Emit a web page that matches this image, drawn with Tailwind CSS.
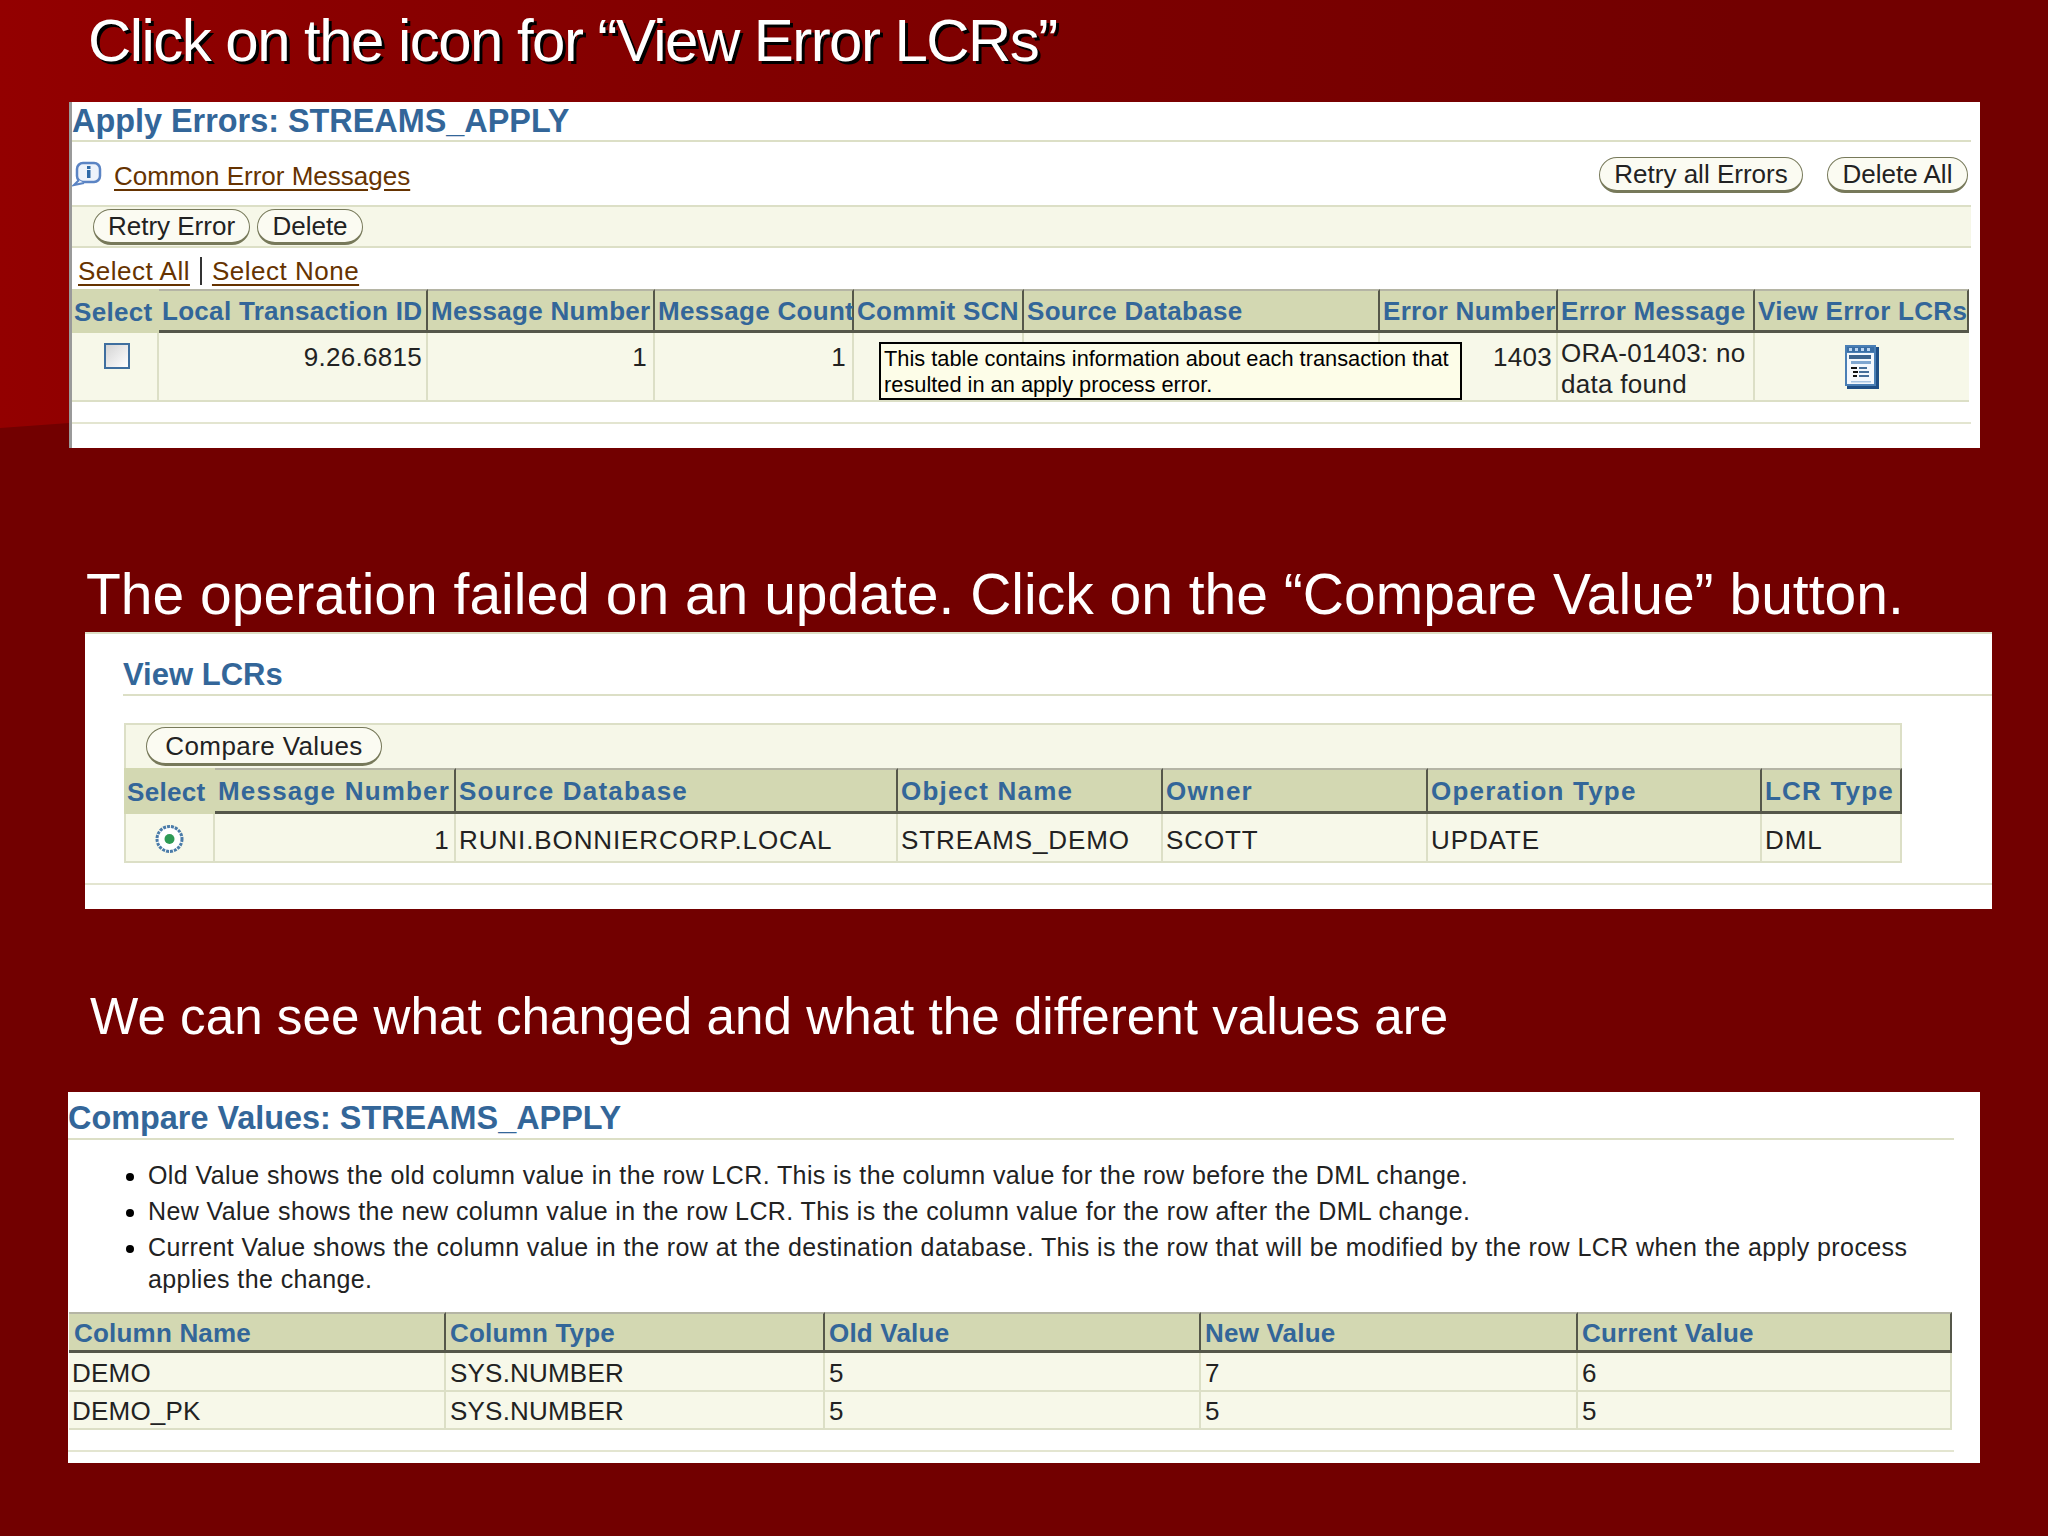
<!DOCTYPE html>
<html lang="en">
<head>
    <meta charset="UTF-8">
    <title>Apply Errors</title>
    <script src="https://cdn.jsdelivr.net/npm/@tailwindcss/browser@4"></script>
</head>
<body class="bg-[#720000] font-['Liberation_Sans',Arial,sans-serif]">
    <div class="relative w-[2048px] h-[1536px] overflow-hidden">
        <!-- Slide background -->
        <div class="absolute left-0 top-0 w-[2048px] h-[430px] bg-[linear-gradient(90deg,#930000,#8a0000_15%,#800000_40%,#720000_85%)] [clip-path:polygon(0_0,100%_0,100%_400px,69px_423px,0_428px)]"></div>

        <div class="relative">
            <!-- Slide 1 -->
            <h1 class="h-[102px] pl-[88px] pt-[9px] text-[60px] leading-[64px] tracking-[-1.55px] text-white [text-shadow:3px_3px_0_#000]">Click on the icon for “View Error LCRs”</h1>
            <section class="ml-[69px] w-[1911px] h-[346px] bg-white border-l-[3px] border-[#9a9a9a] pr-[9px] text-[26px] text-[#222]">
                <div class="h-[40px] pt-[1px] border-b-2 border-[#dcdfc6] text-[32.4px] leading-[36px] font-semibold text-[#336699]">Apply Errors: STREAMS_APPLY</div>
                <div class="h-[63px] flex items-center justify-between pr-[3px] pt-[5px]">
                    <div class="flex items-center">
                        <svg class="w-[30px] h-[26px] -mt-[4px]" viewBox="0 0 30 26" fill="none">
                            <rect x="5" y="2" width="23" height="19" rx="6" fill="#eef3fb" stroke="#5b84c4" stroke-width="2.5"/>
                            <path d="M7 19 L2 24 L12 22" fill="#eef3fb" stroke="#5b84c4" stroke-width="2"/>
                            <rect x="15" y="9" width="3.5" height="8" fill="#2f6aa8"/>
                            <rect x="15" y="5" width="3.5" height="3" fill="#2f6aa8"/>
                        </svg>
                        <a class="ml-[12px] text-[#663300] underline underline-offset-4">Common Error Messages</a>
                    </div>
                    <div class="flex gap-[24px] -mt-[2px]">
                        <button class="h-[36px] w-[204px] rounded-full border border-[#77795a] border-b-[3px] bg-[#fbfbf2] leading-[30px]">Retry all Errors</button>
                        <button class="h-[36px] w-[141px] rounded-full border border-[#77795a] border-b-[3px] bg-[#fbfbf2] leading-[30px]">Delete All</button>
                    </div>
                </div>
                <div class="h-[43px] flex items-center gap-[7px] pl-[21px] bg-[#f6f7e8] border-y-2 border-[#dcdfc6]">
                    <button class="h-[36px] w-[157px] rounded-full border border-[#77795a] border-b-[3px] bg-[#fbfbf2] leading-[30px]">Retry Error</button>
                    <button class="h-[36px] w-[106px] rounded-full border border-[#77795a] border-b-[3px] bg-[#fbfbf2] leading-[30px]">Delete</button>
                </div>
                <div class="h-[41px] flex items-center pl-[6px] pt-[5px] tracking-[0.5px] text-[#663300]">
                    <a class="underline underline-offset-4">Select All</a>
                    <span class="mx-[10px] w-[2px] h-[28px] bg-[#333]"></span>
                    <a class="underline underline-offset-4">Select None</a>
                </div>
                <!-- Error table -->
                <div class="relative w-[1897px] grid grid-cols-[87px_269px_227px_199px_170px_356px_178px_197px_214px] tracking-[0.3px]">
                    <div class="h-[44px] pl-[2px] pt-[2px] flex items-center bg-[#d3d8b2] font-bold text-[#336699]">Select</div>
                    <div class="h-[44px] pl-[3px] pt-[2px] flex items-center bg-[#d3d8b2] border-t-2 border-t-[#b5b5a5] border-b-[3px] border-b-[#55574a] border-r-2 border-r-[#55574a] font-bold text-[#336699] whitespace-nowrap">Local Transaction ID</div>
                    <div class="h-[44px] pl-[3px] pt-[2px] flex items-center bg-[#d3d8b2] border-t-2 border-t-[#b5b5a5] border-b-[3px] border-b-[#55574a] border-r-2 border-r-[#55574a] font-bold text-[#336699] whitespace-nowrap">Message Number</div>
                    <div class="h-[44px] pl-[3px] pt-[2px] flex items-center bg-[#d3d8b2] border-t-2 border-t-[#b5b5a5] border-b-[3px] border-b-[#55574a] border-r-2 border-r-[#55574a] font-bold text-[#336699] whitespace-nowrap">Message Count</div>
                    <div class="h-[44px] pl-[3px] pt-[2px] flex items-center bg-[#d3d8b2] border-t-2 border-t-[#b5b5a5] border-b-[3px] border-b-[#55574a] border-r-2 border-r-[#55574a] font-bold text-[#336699] whitespace-nowrap">Commit SCN</div>
                    <div class="h-[44px] pl-[3px] pt-[2px] flex items-center bg-[#d3d8b2] border-t-2 border-t-[#b5b5a5] border-b-[3px] border-b-[#55574a] border-r-2 border-r-[#55574a] font-bold text-[#336699] whitespace-nowrap">Source Database</div>
                    <div class="h-[44px] pl-[3px] pt-[2px] flex items-center bg-[#d3d8b2] border-t-2 border-t-[#b5b5a5] border-b-[3px] border-b-[#55574a] border-r-2 border-r-[#55574a] font-bold text-[#336699] whitespace-nowrap">Error Number</div>
                    <div class="h-[44px] pl-[3px] pt-[2px] flex items-center bg-[#d3d8b2] border-t-2 border-t-[#b5b5a5] border-b-[3px] border-b-[#55574a] border-r-2 border-r-[#55574a] font-bold text-[#336699] whitespace-nowrap">Error Message</div>
                    <div class="h-[44px] pl-[3px] pt-[2px] flex items-center bg-[#d3d8b2] border-t-2 border-t-[#b5b5a5] border-b-[3px] border-b-[#55574a] border-r-2 border-r-[#55574a] font-bold text-[#336699] whitespace-nowrap">View Error LCRs</div>

                    <div class="h-[69px] flex justify-center pt-[10px] pl-[4px] bg-[#f7f8e9] border-r-2 border-b-2 border-[#dcdfc6]">
                        <span class="w-[26px] h-[26px] border-2 border-[#3f6f9f] bg-[linear-gradient(135deg,#d4d4d4,#ffffff)]"></span>
                    </div>
                    <div class="h-[69px] pt-[9px] pr-[4px] text-right leading-[30px] bg-[#f7f8e9] border-r-2 border-b-2 border-[#dcdfc6]">9.26.6815</div>
                    <div class="h-[69px] pt-[9px] pr-[6px] text-right leading-[30px] bg-[#f7f8e9] border-r-2 border-b-2 border-[#dcdfc6]">1</div>
                    <div class="h-[69px] pt-[9px] pr-[6px] text-right leading-[30px] bg-[#f7f8e9] border-r-2 border-b-2 border-[#dcdfc6]">1</div>
                    <div class="h-[69px] bg-[#f7f8e9] border-r-2 border-b-2 border-[#dcdfc6]"></div>
                    <div class="h-[69px] bg-[#f7f8e9] border-r-2 border-b-2 border-[#dcdfc6]"></div>
                    <div class="h-[69px] pt-[9px] pr-[4px] text-right leading-[30px] bg-[#f7f8e9] border-r-2 border-b-2 border-[#dcdfc6]">1403</div>
                    <div class="h-[69px] pt-[5px] pl-[3px] leading-[31px] bg-[#f7f8e9] border-r-2 border-b-2 border-[#dcdfc6]">ORA-01403: no<br>data found</div>
                    <div class="h-[69px] flex justify-center pt-[12px] bg-[#f7f8e9] border-b-2 border-[#dcdfc6]">
                        <svg class="w-[34px] h-[44px]" viewBox="0 0 34 44">
                            <rect x="2" y="2" width="32" height="42" fill="#1f4f86"/>
                            <rect x="0" y="0" width="31" height="41" fill="#4a7fb5"/>
                            <rect x="2" y="2" width="27" height="5" fill="#3a6ea5"/>
                            <rect x="4" y="3" width="3" height="3" fill="#bcd6f2"/>
                            <rect x="10" y="3" width="3" height="3" fill="#bcd6f2"/>
                            <rect x="16" y="3" width="3" height="3" fill="#bcd6f2"/>
                            <rect x="22" y="3" width="3" height="3" fill="#bcd6f2"/>
                            <rect x="2" y="8" width="27" height="31" fill="#f4f8fd"/>
                            <rect x="4" y="10" width="22" height="4" fill="#3c648f"/>
                            <rect x="6" y="16" width="20" height="3" fill="#7fa6d0"/>
                            <rect x="6" y="22" width="6" height="2" fill="#111"/>
                            <rect x="14" y="22" width="8" height="2" fill="#466e99"/>
                            <rect x="8" y="26" width="5" height="2" fill="#111"/>
                            <rect x="14" y="26" width="10" height="2" fill="#466e99"/>
                            <rect x="8" y="30" width="4" height="2" fill="#111"/>
                            <rect x="14" y="30" width="10" height="2" fill="#466e99"/>
                            <rect x="6" y="36" width="20" height="1.5" fill="#a9c5e3"/>
                        </svg>
                    </div>

                    <!-- Tooltip over the table -->
                    <div class="absolute left-[807px] top-[53px] w-[583px] h-[58px] px-[3px] pt-[2px] border-2 border-black bg-[#fdfde8] text-[21.8px] leading-[26px] tracking-normal text-black">This table contains information about each transaction that resulted in an apply process error.</div>
                </div>
                <div class="h-[20px]"></div>
                <div class="h-[2px] bg-[#e3e5d0]"></div>
            </section>

            <!-- Slide 2 -->
            <h1 class="h-[184px] pl-[86px] pb-[8px] flex items-end text-[57px] leading-[60px] text-white">The operation failed on an update. Click on the “Compare Value” button.</h1>
            <section class="ml-[85px] w-[1907px] h-[277px] bg-white border-t-2 border-[#dcdfc6] text-[26px] text-[#222]">
                <div class="ml-[38px] h-[62px] pt-[23px] border-b-2 border-[#dcdfc6] text-[31px] leading-[36px] font-bold text-[#336699]">View LCRs</div>
                <div class="ml-[39px] mt-[27px] w-[1778px] h-[45px] pl-[20px] flex items-center bg-[#f6f7e8] border-x-2 border-t-2 border-[#dcdfc6]">
                    <button class="h-[39px] w-[236px] rounded-full border border-[#77795a] border-b-[3px] bg-[#fbfbf2] leading-[30px] tracking-[0.4px]">Compare Values</button>
                </div>
                <!-- LCR table -->
                <div class="ml-[39px] w-[1778px] grid grid-cols-[91px_241px_442px_265px_265px_334px_140px] tracking-[1.2px]">
                    <div class="h-[46px] pl-[3px] pt-[2px] flex items-center bg-[#d3d8b2] tracking-[0.3px] font-bold text-[#336699]">Select</div>
                    <div class="h-[46px] pl-[3px] pt-[2px] flex items-center bg-[#d3d8b2] border-t-2 border-t-[#b5b5a5] border-b-[3px] border-b-[#55574a] border-r-2 border-r-[#55574a] font-bold text-[#336699] whitespace-nowrap">Message Number</div>
                    <div class="h-[46px] pl-[3px] pt-[2px] flex items-center bg-[#d3d8b2] border-t-2 border-t-[#b5b5a5] border-b-[3px] border-b-[#55574a] border-r-2 border-r-[#55574a] font-bold text-[#336699] whitespace-nowrap">Source Database</div>
                    <div class="h-[46px] pl-[3px] pt-[2px] flex items-center bg-[#d3d8b2] border-t-2 border-t-[#b5b5a5] border-b-[3px] border-b-[#55574a] border-r-2 border-r-[#55574a] font-bold text-[#336699] whitespace-nowrap">Object Name</div>
                    <div class="h-[46px] pl-[3px] pt-[2px] flex items-center bg-[#d3d8b2] border-t-2 border-t-[#b5b5a5] border-b-[3px] border-b-[#55574a] border-r-2 border-r-[#55574a] font-bold text-[#336699] whitespace-nowrap">Owner</div>
                    <div class="h-[46px] pl-[3px] pt-[2px] flex items-center bg-[#d3d8b2] border-t-2 border-t-[#b5b5a5] border-b-[3px] border-b-[#55574a] border-r-2 border-r-[#55574a] font-bold text-[#336699] whitespace-nowrap">Operation Type</div>
                    <div class="h-[46px] pl-[3px] pt-[2px] flex items-center bg-[#d3d8b2] border-t-2 border-t-[#b5b5a5] border-b-[3px] border-b-[#55574a] border-r-2 border-r-[#55574a] font-bold text-[#336699] whitespace-nowrap">LCR Type</div>

                    <div class="h-[49px] flex items-center justify-center pt-[2px] bg-[#f7f8e9] border-x-2 border-b-2 border-[#dcdfc6]">
                        <svg class="w-[29px] h-[28px]" viewBox="0 0 29 28">
                            <ellipse cx="14.5" cy="14" rx="12.5" ry="12.5" fill="#fff" stroke="#4a7ba8" stroke-width="3" stroke-dasharray="3 1"/>
                            <circle cx="14.5" cy="14" r="5" fill="#2e9a55"/>
                        </svg>
                    </div>
                    <div class="h-[49px] flex items-center justify-end pr-[4px] pt-[5px] bg-[#f7f8e9] border-r-2 border-b-2 border-[#dcdfc6]">1</div>
                    <div class="h-[49px] flex items-center pl-[3px] pt-[5px] tracking-[0.9px] bg-[#f7f8e9] border-r-2 border-b-2 border-[#dcdfc6]">RUNI.BONNIERCORP.LOCAL</div>
                    <div class="h-[49px] flex items-center pl-[3px] pt-[5px] tracking-[0.9px] bg-[#f7f8e9] border-r-2 border-b-2 border-[#dcdfc6]">STREAMS_DEMO</div>
                    <div class="h-[49px] flex items-center pl-[3px] pt-[5px] tracking-[0.9px] bg-[#f7f8e9] border-r-2 border-b-2 border-[#dcdfc6]">SCOTT</div>
                    <div class="h-[49px] flex items-center pl-[3px] pt-[5px] tracking-[0.9px] bg-[#f7f8e9] border-r-2 border-b-2 border-[#dcdfc6]">UPDATE</div>
                    <div class="h-[49px] flex items-center pl-[3px] pt-[5px] tracking-[0.9px] bg-[#f7f8e9] border-r-2 border-b-2 border-[#dcdfc6]">DML</div>
                </div>
                <div class="mt-[20px] h-[2px] bg-[#e3e5d0]"></div>
            </section>

            <!-- Slide 3 -->
            <h1 class="h-[183px] pl-[90px] pb-[45px] flex items-end text-[51.2px] leading-[60px] text-white">We can see what changed and what the different values are</h1>
            <section class="ml-[68px] w-[1912px] h-[371px] bg-white pr-[26px] text-[26px] text-[#222]">
                <div class="h-[48px] pt-[8px] border-b-2 border-[#dcdfc6] text-[32.4px] leading-[36px] font-semibold text-[#336699]">Compare Values: STREAMS_APPLY</div>
                <ul class="h-[172px] pl-[80px] pt-[19px] pr-[20px] list-disc marker:text-black text-[25px] leading-[32px] tracking-[0.4px]">
                    <li class="mb-[4px]">Old Value shows the old column value in the row LCR. This is the column value for the row before the DML change.</li>
                    <li class="mb-[4px]">New Value shows the new column value in the row LCR. This is the column value for the row after the DML change.</li>
                    <li>Current Value shows the column value in the row at the destination database. This is the row that will be modified by the row LCR when the apply process applies the change.</li>
                </ul>
                <!-- Compare table -->
                <div class="ml-[1px] grid grid-cols-[377px_379px_376px_377px_374px] tracking-[0.2px]">
                    <div class="h-[41px] pl-[5px] pt-[3px] flex items-center bg-[#d3d8b2] border-t-2 border-t-[#b5b5a5] border-b-[3px] border-b-[#55574a] border-r-2 border-r-[#55574a] font-bold text-[#336699]">Column Name</div>
                    <div class="h-[41px] pl-[4px] pt-[3px] flex items-center bg-[#d3d8b2] border-t-2 border-t-[#b5b5a5] border-b-[3px] border-b-[#55574a] border-r-2 border-r-[#55574a] font-bold text-[#336699]">Column Type</div>
                    <div class="h-[41px] pl-[4px] pt-[3px] flex items-center bg-[#d3d8b2] border-t-2 border-t-[#b5b5a5] border-b-[3px] border-b-[#55574a] border-r-2 border-r-[#55574a] font-bold text-[#336699]">Old Value</div>
                    <div class="h-[41px] pl-[4px] pt-[3px] flex items-center bg-[#d3d8b2] border-t-2 border-t-[#b5b5a5] border-b-[3px] border-b-[#55574a] border-r-2 border-r-[#55574a] font-bold text-[#336699]">New Value</div>
                    <div class="h-[41px] pl-[4px] pt-[3px] flex items-center bg-[#d3d8b2] border-t-2 border-t-[#b5b5a5] border-b-[3px] border-b-[#55574a] border-r-2 border-r-[#55574a] font-bold text-[#336699]">Current Value</div>

                    <div class="h-[39px] flex items-center pl-[3px] pt-[3px] bg-[#f7f8e9] border-r-2 border-b-2 border-[#dcdfc6]">DEMO</div>
                    <div class="h-[39px] flex items-center pl-[4px] pt-[3px] bg-[#f7f8e9] border-r-2 border-b-2 border-[#dcdfc6]">SYS.NUMBER</div>
                    <div class="h-[39px] flex items-center pl-[4px] pt-[3px] bg-[#f7f8e9] border-r-2 border-b-2 border-[#dcdfc6]">5</div>
                    <div class="h-[39px] flex items-center pl-[4px] pt-[3px] bg-[#f7f8e9] border-r-2 border-b-2 border-[#dcdfc6]">7</div>
                    <div class="h-[39px] flex items-center pl-[4px] pt-[3px] bg-[#f7f8e9] border-r-2 border-b-2 border-[#dcdfc6]">6</div>

                    <div class="h-[38px] flex items-center pl-[3px] pt-[3px] bg-[#f7f8e9] border-r-2 border-b-2 border-[#dcdfc6]">DEMO_PK</div>
                    <div class="h-[38px] flex items-center pl-[4px] pt-[3px] bg-[#f7f8e9] border-r-2 border-b-2 border-[#dcdfc6]">SYS.NUMBER</div>
                    <div class="h-[38px] flex items-center pl-[4px] pt-[3px] bg-[#f7f8e9] border-r-2 border-b-2 border-[#dcdfc6]">5</div>
                    <div class="h-[38px] flex items-center pl-[4px] pt-[3px] bg-[#f7f8e9] border-r-2 border-b-2 border-[#dcdfc6]">5</div>
                    <div class="h-[38px] flex items-center pl-[4px] pt-[3px] bg-[#f7f8e9] border-r-2 border-b-2 border-[#dcdfc6]">5</div>
                </div>
                <div class="mt-[20px] h-[2px] bg-[#e3e5d0]"></div>
            </section>
        </div>
    </div>
</body>
</html>
